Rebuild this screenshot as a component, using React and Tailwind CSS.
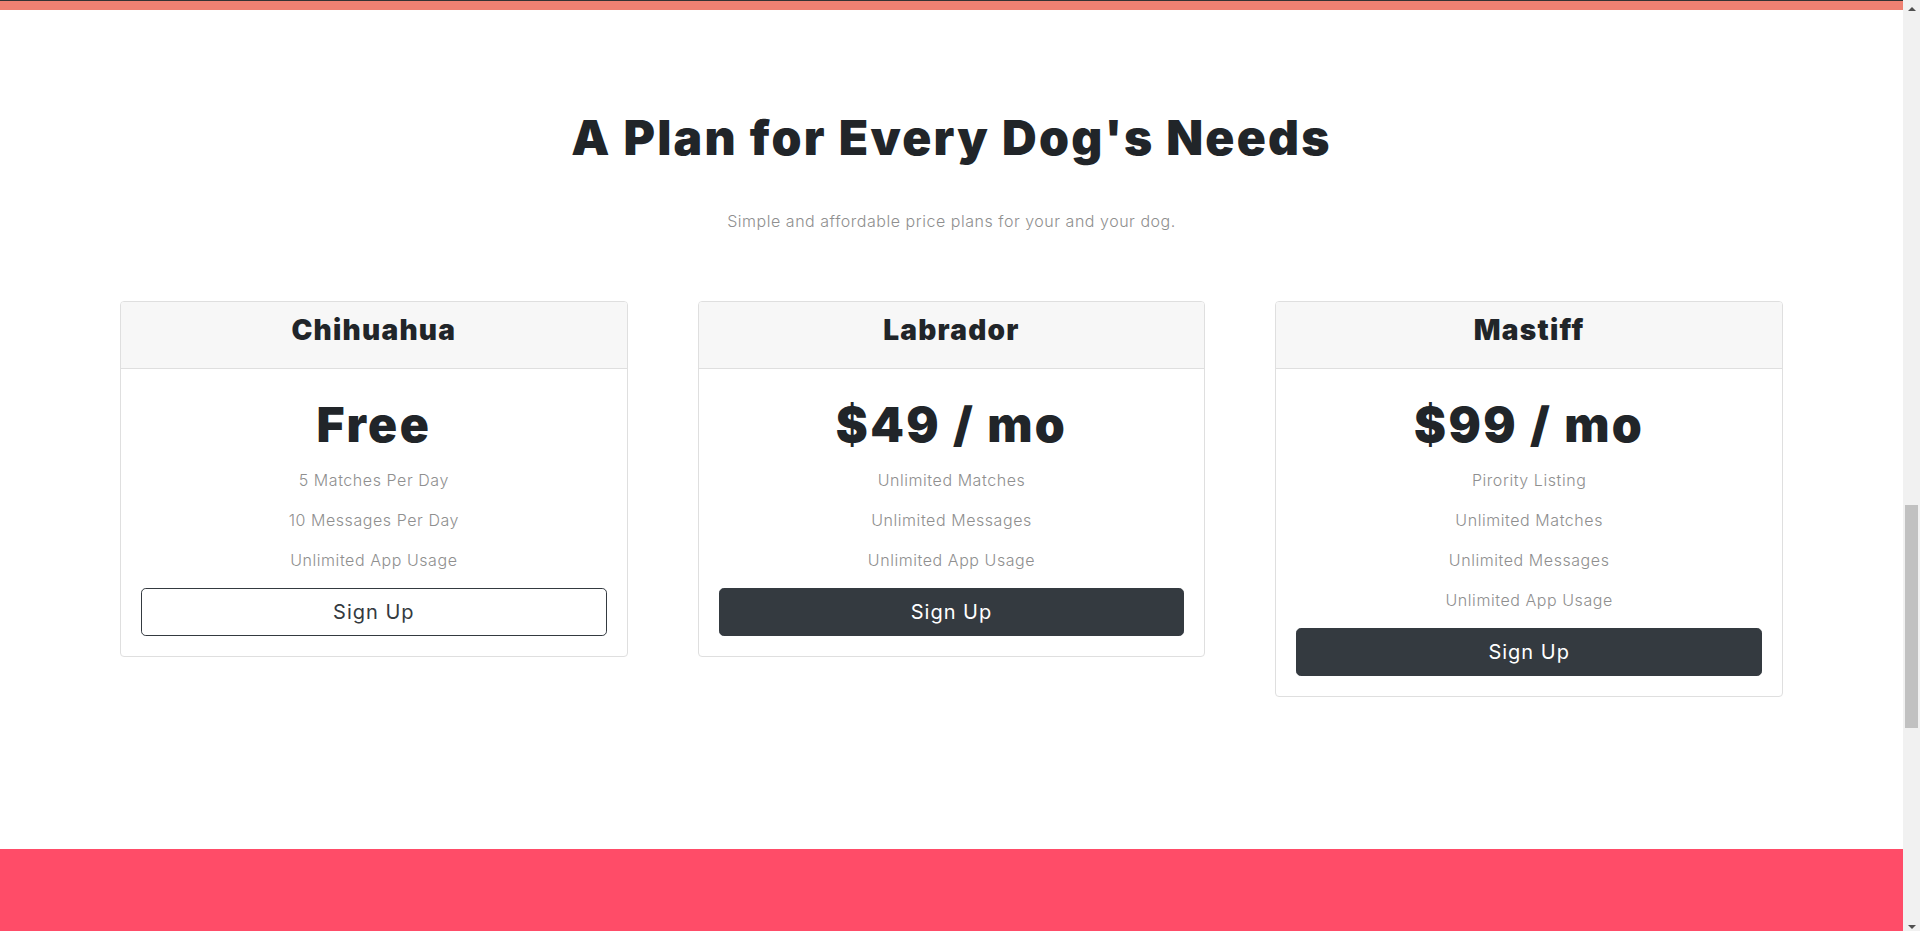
import React from 'react';

const plans = [
  {
    name: 'Chihuahua',
    price: 'Free',
    features: ['5 Matches Per Day', '10 Messages Per Day', 'Unlimited App Usage'],
    outline: true,
  },
  {
    name: 'Labrador',
    price: '$49 / mo',
    features: ['Unlimited Matches', 'Unlimited Messages', 'Unlimited App Usage'],
  },
  {
    name: 'Mastiff',
    price: '$99 / mo',
    features: ['Pirority Listing', 'Unlimited Matches', 'Unlimited Messages', 'Unlimited App Usage'],
  },
];

const PricingCard = ({ plan }) => (
  <div className="border border-[#dfdfdf] rounded-[4px] bg-white overflow-hidden">
    {/* Card header */}
    <div className="bg-[#f7f7f7] border-b border-[#dfdfdf] px-5 py-3 text-center">
      <h3 className="text-[28px] leading-[1.2] mb-2 font-black tracking-[0.045em] text-[#212529]">{plan.name}</h3>
    </div>

    <div className="p-5 text-center">
      <h2 className="text-[48px] leading-[1.5] mb-[7px] font-black tracking-[0.05em] text-[#212529]">{plan.price}</h2>
      {plan.features.map((f) => (
        <p key={f} className="text-base leading-6 mb-4 font-light tracking-[0.035em] text-[#8f8f8f]">{f}</p>
      ))}
      <button
        className={`w-full py-2 px-4 text-[20px] leading-[1.5] rounded-[4.8px] border border-[#343a40] tracking-wider ${plan.outline ? 'bg-white text-[#343a40]' : 'bg-[#343a40] text-white'}`}
      >
        Sign Up
      </button>
    </div>
  </div>
);

const Scrollbar = () => (
  <div className="w-[17px] h-full bg-[#f1f1f1] flex flex-col items-center">
    <div className="h-[17px] w-full flex items-center justify-center">
      <div className="w-0 h-0 border-l-[4px] border-r-[4px] border-b-[4px] border-l-transparent border-r-transparent border-b-[#505050]"></div>
    </div>
    <div className="mt-[488px] h-[223px] w-[13px] bg-[#c1c1c1]"></div>
    <div className="flex-1"></div>
    <div className="h-[17px] w-full flex items-end justify-center pb-[2px]">
      <div className="w-0 h-0 border-l-[4px] border-r-[4px] border-t-[4px] border-l-transparent border-r-transparent border-t-[#505050]"></div>
    </div>
  </div>
);

export default function App() {
  return (
    <div className="w-[1920px] h-[931px] overflow-hidden flex bg-white font-['Inter','Noto_Sans',sans-serif]">
      <div className="w-[1903px] h-full flex flex-col">
        {/* end of previous section */}
        <div className="h-px bg-[#333333]"></div>
        <div className="h-[9px] bg-[#ef8172]"></div>

        {/* Pricing */}
        <section className="px-[120px] pt-[92px] pb-[152px] text-center">
          <h2 className="text-[48px] leading-[1.5] font-black tracking-[0.047em] text-[#212529] mb-[35px]">
            A Plan for Every Dog's Needs
          </h2>
          <p className="text-base leading-6 font-light tracking-[0.033em] text-[#8f8f8f] mb-[68px]">
            Simple and affordable price plans for your and your dog.
          </p>

          <div className="grid grid-cols-3 gap-[70px] items-start">
            {plans.map((plan) => (
              <PricingCard key={plan.name} plan={plan} />
            ))}
          </div>
        </section>

        {/* Call to action */}
        <section className="flex-1 bg-[#ff4c68]"></section>
      </div>
      <Scrollbar />
    </div>
  );
}
